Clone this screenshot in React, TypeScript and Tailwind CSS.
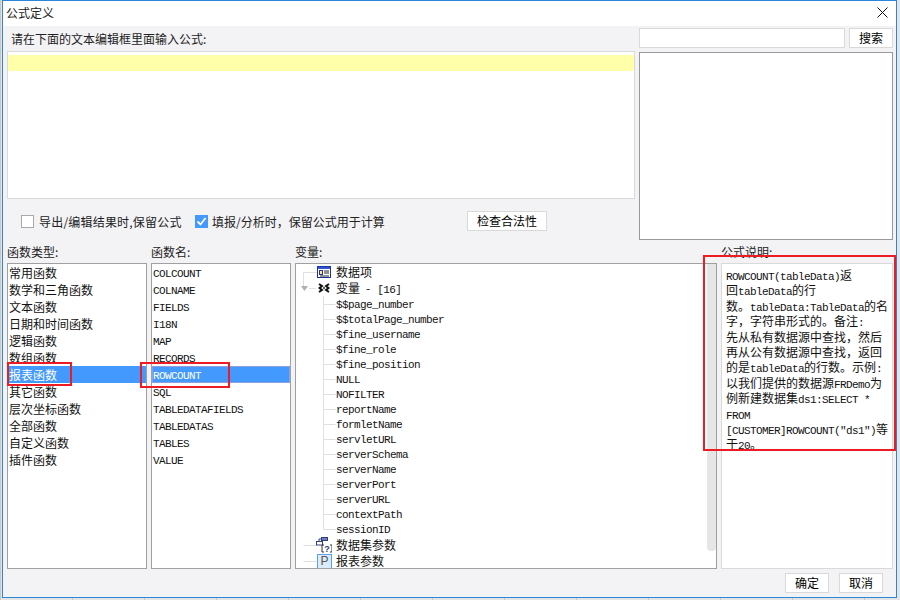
const sans = "font-['Noto_Sans_CJK_SC','Liberation_Sans',sans-serif]"

const functionTypes = ["常用函数", "数学和三角函数", "文本函数", "日期和时间函数", "逻辑函数", "数组函数", "报表函数", "其它函数", "层次坐标函数", "全部函数", "自定义函数", "插件函数"]
const functionNames = ["COLCOUNT", "COLNAME", "FIELDS", "I18N", "MAP", "RECORDS", "ROWCOUNT", "SQL", "TABLEDATAFIELDS", "TABLEDATAS", "TABLES", "VALUE"]
const variables = ["$$page_number", "$$totalPage_number", "$fine_username", "$fine_role", "$fine_position", "NULL", "NOFILTER", "reportName", "formletName", "servletURL", "serverSchema", "serverName", "serverPort", "serverURL", "contextPath", "sessionID"]

function M({ children }: { children: React.ReactNode }) {
  return <span className="font-['Liberation_Mono',monospace] text-[11px] tracking-[-0.6px]">{children}</span>
}

function Line({ children }: { children: React.ReactNode }) {
  return <div className="h-[15.4px] leading-[15.4px]">{children}</div>
}

function Button({ label, width = "w-[44px]" }: { label: string; width?: string }) {
  return (
    <button className={`h-5 ${width} shrink-0 bg-white border border-[#d9d9d9] text-[12px] leading-none text-black`}>
      {label}
    </button>
  )
}

function Column({ label, width, children }: { label: string; width: string; children: React.ReactNode }) {
  return (
    <div className={`${width} shrink-0 flex flex-col`}>
      <div className="h-[23px] flex items-center text-[12px] text-[#222]">{label}</div>
      {children}
    </div>
  )
}

function ListRow({ text, selected, mono }: { text: string; selected: boolean; mono?: boolean }) {
  return (
    <div className={`h-[17px] flex items-center whitespace-nowrap ${selected ? "bg-[#4499ff] text-white" : "text-[#111]"} ${mono ? "pt-[4px]" : ""} ${selected && mono ? "border border-[#8f9fe0]" : "pl-[1px]"}`}>
      {mono ? <M>{text}</M> : text}
    </div>
  )
}

function DataIcon() {
  return (
    <svg width="14" height="12" viewBox="0 0 14 12">
      <rect x="0.5" y="0.5" width="13" height="11" fill="#fff" stroke="#1f2f9f" />
      <rect x="1" y="1" width="12" height="2" fill="#2f55d4" />
      <rect x="2.5" y="4.5" width="3" height="4" fill="#ffe98a" stroke="#1f2f9f" />
      <path d="M7 5h5M7 7h5M3 10h9" stroke="#222" strokeWidth="1" />
    </svg>
  )
}

function VariableIcon() {
  return (
    <svg width="12" height="10" viewBox="0 0 12 10">
      <path d="M1 1 4 3 1.5 5 4 7 1 9M11 1 8 3 10.5 5 8 7 11 9" fill="none" stroke="#111" strokeWidth="2" />
      <rect x="5" y="4" width="2" height="2" fill="#3d7a3d" />
    </svg>
  )
}

function DatasetIcon() {
  return (
    <svg width="16" height="16" viewBox="0 0 16 16">
      <rect x="5.5" y="0.5" width="6" height="3" fill="#6a7fd0" stroke="#33406f" />
      <rect x="0.5" y="4.5" width="6" height="3.5" fill="#fff" stroke="#33406f" />
      <path d="M6 2H3v2" fill="none" stroke="#33406f" />
      <path d="M8 8H6v7h2M14 8h2v7h-2" fill="none" stroke="#333" strokeWidth="1" />
      <text x="11" y="14.5" textAnchor="middle" fontSize="9" fontWeight="700" fill="#33406f" fontFamily="Liberation Sans">?</text>
    </svg>
  )
}

function TreeLines() {
  const rowYs = variables.map((_, i) => 40 + i * 15)
  return (
    <svg className="absolute left-0 top-0 pointer-events-none" width="60" height="305">
      <g stroke="#e0e0e0" fill="none">
        <path d="M7.5 8.5h13M13 24.5h7M7.5 281.5h13M7.5 297.5h13M7.5 8.5v17M27.5 32v233" />
        {rowYs.map((y) => (
          <path key={y} d={`M27.5 ${y + 0.5}h12`} />
        ))}
      </g>
      <path d="M5 22h7l-3.5 5z" fill="#b0b0b0" />
    </svg>
  )
}

function TreePanel() {
  return (
    <div className="relative flex-1 min-w-0 overflow-hidden">
      <TreeLines />
      <div className="relative flex flex-col text-[12px] text-[#111]">
        <div className="h-4 pl-[21px] flex items-center gap-[5px]">
          <span className="w-[14px] flex"><DataIcon /></span>
          <span>数据项</span>
        </div>
        <div className="h-4 pl-[22px] flex items-center">
          <span className="w-[18px] flex"><VariableIcon /></span>
          <span>变量</span>
          <span className="ml-[6px]">-</span>
          <span className="ml-[7px] pt-[1px]"><M>[16]</M></span>
        </div>
        {variables.map((name) => (
          <div key={name} className="h-[15px] pt-[3px] pl-[40px] flex items-center whitespace-nowrap">
            <M>{name}</M>
          </div>
        ))}
        <div className="h-4 mt-[1px] pl-[20px] flex items-center">
          <span className="w-[20px] flex"><DatasetIcon /></span>
          <span>数据集参数</span>
        </div>
        <div className="h-4 pl-[21px] flex items-center">
          <span className="w-[15px] h-[15px] mr-[4px] border border-[#5aa0f0] bg-[#dcebfb] flex items-center justify-center font-['Liberation_Sans',sans-serif] text-[12px] text-[#555]">P</span>
          <span>报表参数</span>
        </div>
      </div>
    </div>
  )
}

function Description() {
  return (
    <div className="h-[306px] border border-[#d9d9d9] bg-white pl-[4px] pt-[3px] text-[12px] text-[#111] whitespace-nowrap">
      <Line><M>ROWCOUNT(tableData)</M>返</Line>
      <Line>回<M>tableData</M>的行</Line>
      <Line>数。<M>tableData:TableData</M>的名</Line>
      <Line>字，字符串形式的。备注<M>:</M></Line>
      <Line>先从私有数据源中查找，然后</Line>
      <Line>再从公有数据源中查找，返回</Line>
      <Line>的是<M>tableData</M>的行数。示例<M>:</M></Line>
      <Line>以我们提供的数据源<M>FRDemo</M>为</Line>
      <Line>例新建数据集<M>ds1:SELECT *</M></Line>
      <Line><M>FROM</M></Line>
      <Line><M>[CUSTOMER]ROWCOUNT("ds1")</M>等</Line>
      <Line>于<M>20</M>。</Line>
    </div>
  )
}

export default function App() {
  return (
    <div className={`relative w-[900px] h-[600px] overflow-hidden pl-[2px] bg-[#e4e4e4] bg-[repeating-linear-gradient(90deg,#c8c8c8_0,#c8c8c8_1px,transparent_1px,transparent_72px)] ${sans}`}>
      <div className="w-[895px] h-[598px] border border-[#2b88d8] bg-white flex flex-col">
        {/* Title bar */}
        <div className="h-[25px] shrink-0 flex items-center justify-between pl-[3px] pr-[8px] pb-[2px] text-[12px] text-[#222]">
          <span>公式定义</span>
          <svg width="11" height="11" viewBox="0 0 11 11">
            <path d="M0.5 0.5l10 10M10.5 0.5l-10 10" stroke="#111" strokeWidth="1" />
          </svg>
        </div>

        <div className="flex-1 min-h-0 bg-[#f3f3f6] pl-[4px] pr-[3px] flex flex-col">
          {/* Editor and search */}
          <div className="flex gap-[4px] h-[214px] shrink-0">
            <div className="w-[628px] flex flex-col">
              <div className="h-[25px] shrink-0 flex items-center pl-[4px] text-[12px] text-[#222]">请在下面的文本编辑框里面输入公式:</div>
              <div className="h-[148px] shrink-0 border border-[#d9d9d9] bg-white pt-[3px]">
                <div className="h-4 bg-[#ffffaa]" />
              </div>
              <div className="flex-1 flex items-center pt-[3px] pl-[14px] text-[12px] text-[#222]">
                <span className="w-[13px] h-[13px] border border-[#a8a8a8] bg-white" />
                <span className="ml-[5px] pt-[1px] w-[156px] whitespace-nowrap tracking-[0.2px]">导出/编辑结果时,保留公式</span>
                <span className="w-[13px] h-[13px] bg-[#4499ff] flex items-center justify-center">
                  <svg width="11" height="11" viewBox="0 0 11 11">
                    <path d="M1.5 5.5 4.5 8.5 9.5 2" fill="none" stroke="#fff" strokeWidth="1.8" />
                  </svg>
                </span>
                <span className="ml-[4px] pt-[1px] w-[255px] whitespace-nowrap">填报/分析时，保留公式用于计算</span>
                <Button label="检查合法性" width="w-[80px]" />
              </div>
            </div>
            <div className="w-[254px] flex flex-col pt-[2px]">
              <div className="flex gap-[4px] h-5 shrink-0">
                <div className="flex-1 border border-[#d9d9d9] bg-white" />
                <Button label="搜索" />
              </div>
              <div className="mt-[4px] h-[188px] border border-[#999] bg-white" />
            </div>
          </div>

          {/* Function lists */}
          <div className="flex gap-[4px] shrink-0">
            <Column label="函数类型:" width="w-[140px]">
              <div className="h-[306px] border border-[#a0a0a0] bg-white text-[12px]">
                {functionTypes.map((t) => (
                  <ListRow key={t} text={t} selected={t === "报表函数"} />
                ))}
              </div>
            </Column>
            <Column label="函数名:" width="w-[140px]">
              <div className="h-[306px] border border-[#a0a0a0] bg-white text-[12px]">
                {functionNames.map((n) => (
                  <ListRow key={n} text={n} selected={n === "ROWCOUNT"} mono />
                ))}
              </div>
            </Column>
            <Column label="变量:" width="w-[422px]">
              <div className="h-[306px] border border-[#a0a0a0] bg-white flex">
                <TreePanel />
                <div className="w-[9px] h-[287px] shrink-0 rounded-b-[4px] bg-[#e6e6e6]" />
              </div>
            </Column>
            <Column label="公式说明:" width="w-[172px]">
              <Description />
            </Column>
          </div>

          {/* Footer */}
          <div className="flex justify-end gap-[10px] pt-[4px] pr-[10px]">
            <Button label="确定" />
            <Button label="取消" />
          </div>
        </div>
      </div>

      {/* Red annotations */}
      <div className="absolute left-[7px] top-[362px] w-[65px] h-[24px] border-2 border-[#ed1c24]" />
      <div className="absolute left-[140px] top-[362px] w-[90px] h-[26px] border-2 border-[#ed1c24]" />
      <div className="absolute left-[703px] top-[255px] w-[193px] h-[196px] border-2 border-[#ed1c24]" />
    </div>
  )
}
